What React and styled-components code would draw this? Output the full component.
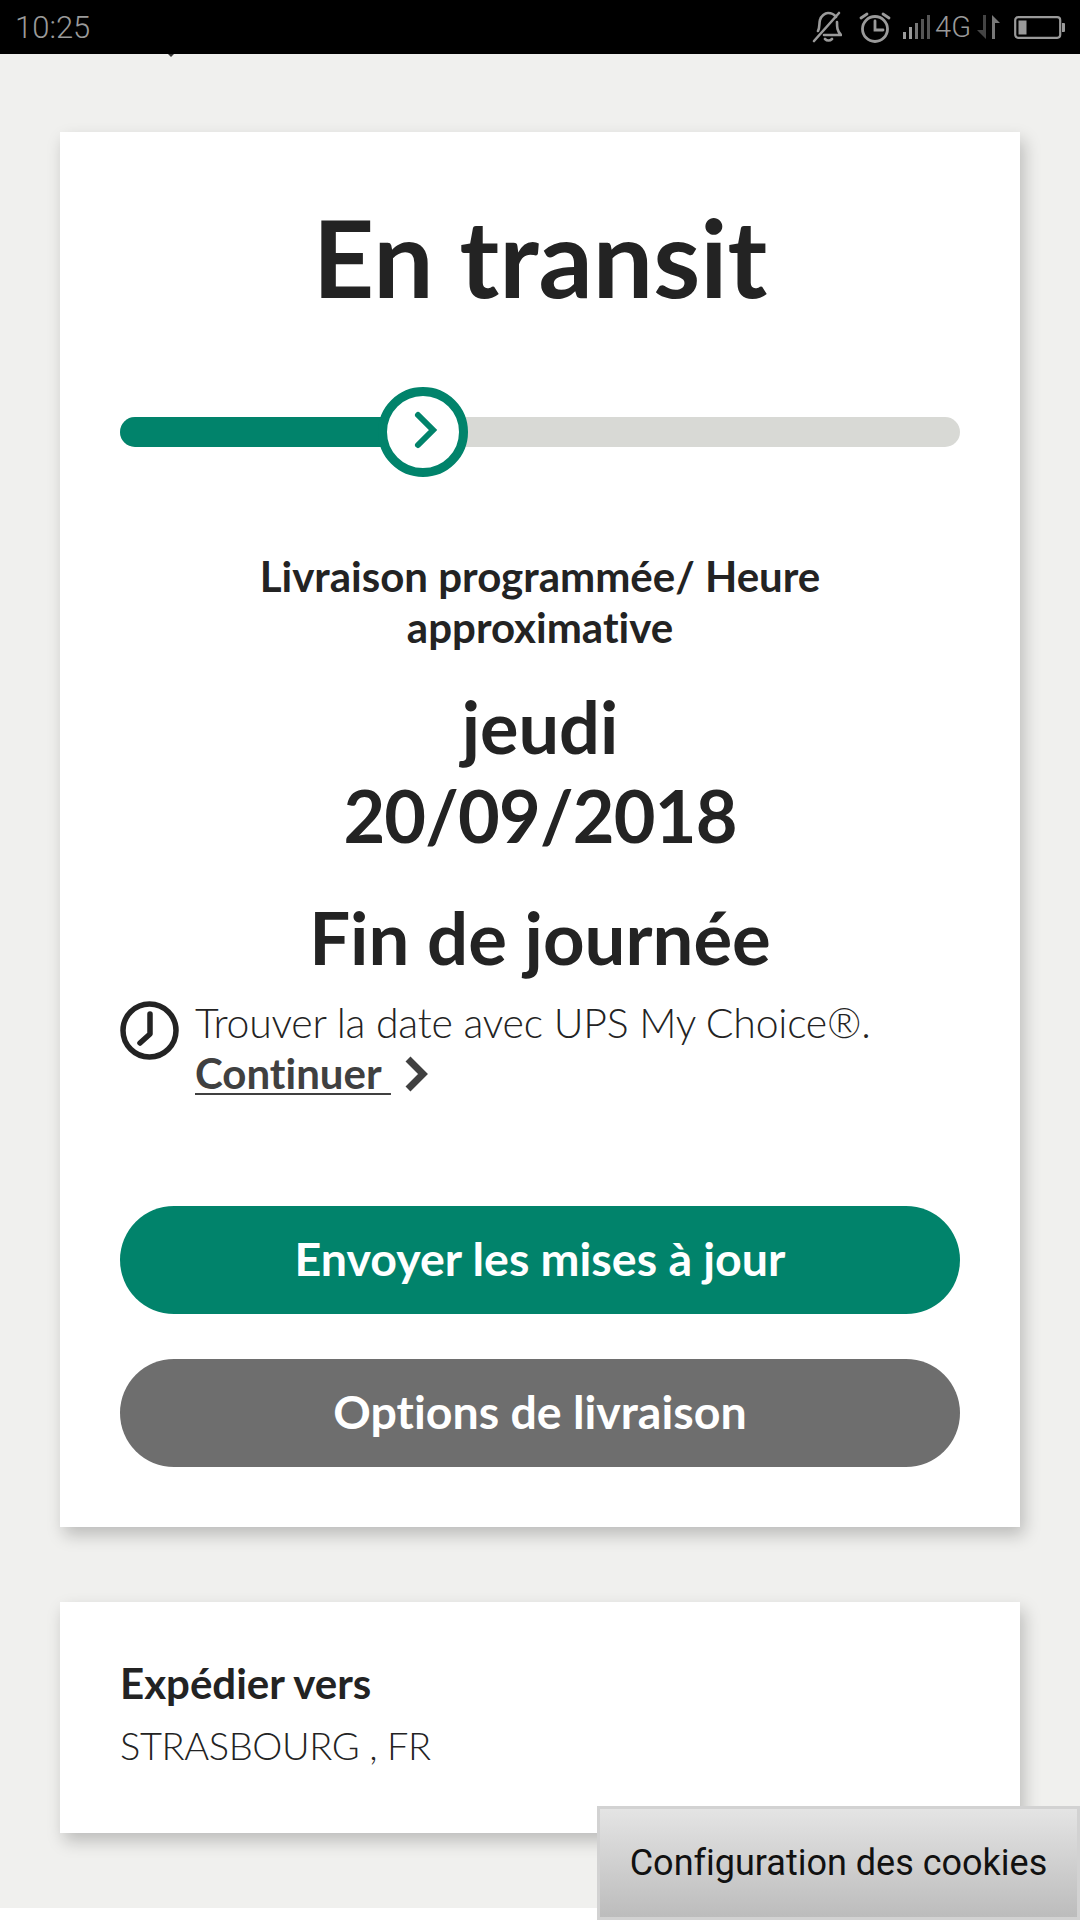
import React from 'react';
import styled, { createGlobalStyle } from 'styled-components';

const Global = createGlobalStyle`
  html, body { margin: 0; padding: 0; background: #f0f0ee; }
  body { font-family: Lato, "Open Sans", sans-serif; color: #232323; font-variant-ligatures: none; }
  * { box-sizing: border-box; }
`;
const Page = styled.div`
  position: relative; width: 1080px; height: 1920px; overflow: hidden; background: #f0f0ee;
  display: flex; flex-direction: column;
`;
const StatusBar = styled.div`
  height: 54px; flex: none; background: #000; display: flex; align-items: center; justify-content: space-between;
  padding: 0 15px 0 15px; color: #9a9a9a;
`;
const Time = styled.span`
  font-family: Roboto, sans-serif; font-size: 31px; font-weight: 300;
`;
const StatusIcons = styled.div`display: flex; align-items: center;`;
const NetLabel = styled.span`font-family: Roboto, sans-serif; font-size: 29px; font-weight: 300; margin: 0 5px 0 5px;`;
const Caret = styled.div`
  position: absolute; left: 168px; top: 54px; width: 0; height: 0;
  border-left: 3px solid transparent; border-right: 3px solid transparent; border-top: 3px solid #333;
`;
const Main = styled.div`
  flex: 1; display: flex; flex-direction: column; gap: 75px; padding: 78px 60px 0;
`;
const Card = styled.section`
  background: #fff; width: 960px; box-shadow: 4px 8px 16px rgba(0,0,0,.22);
`;
const StatusCard = styled(Card)`height: 1395px; padding: 73px 60px 0; display: flex; flex-direction: column;`;
const Title = styled.h1`
  margin: 0; font-size: 107px; line-height: 104px; font-weight: 700; text-align: center;
`;
const Progress = styled.div`
  position: relative; height: 30px; margin-top: 108px; border-radius: 15px; background: #d8d9d5;
`;
const ProgressFill = styled.div`
  height: 100%; border-radius: 15px 0 0 15px; background: #01836b;
`;
const Knob = styled.div`
  position: absolute; left: 258px; top: -30px; width: 90px; height: 90px; border-radius: 50%;
  background: #fff; border: 9px solid #01836b; display: flex; align-items: center; justify-content: center;
`;
const Label = styled.div`
  margin-top: 104px; font-size: 42px; line-height: 51px; font-weight: 700; text-align: center;
`;
const DateText = styled.div`
  margin-top: 29px; font-size: 72px; line-height: 89px; font-weight: 700; text-align: center;
`;
const DateLine = styled.span`letter-spacing: -.8px;`;
const Slot = styled.div`
  margin-top: 33px; font-size: 72.5px; line-height: 88px; font-weight: 700; text-align: center;
`;
const Hint = styled.div`display: flex; gap: 16px; margin-top: 16px;`;
const HintIcon = styled.svg`flex: none; width: 59px; height: 59px; margin-top: 4px;`;
const HintText = styled.div`font-size: 41px; line-height: 51px; font-weight: 300; letter-spacing: -.25px;`;
const LinkRow = styled.div`display: flex; align-items: center; gap: 13px;`;
const Link = styled.a`font-size: 42px; font-weight: 700; letter-spacing: 0; color: #404040; text-decoration: underline; text-underline-offset: 4px; text-decoration-thickness: 2px; white-space: pre;`;
const Buttons = styled.div`display: flex; flex-direction: column; gap: 45px; margin-top: 107px;`;
const Button = styled.div`
  height: 108px; padding-bottom: 4px; border-radius: 54px; display: flex; align-items: center; justify-content: center;
  color: #fff; font-size: 46.5px; font-weight: 700; background: ${p => p.$bg};
`;
const ShipCard = styled(Card)`height: 231px; padding: 56px 60px 0;`;
const ShipLabel = styled.div`font-size: 42px; line-height: 50px; font-weight: 700;`;
const ShipValue = styled.div`font-size: 38px; line-height: 50px; font-weight: 300; letter-spacing: -.4px; margin-top: 12px;`;
const FootStrip = styled.div`position: absolute; left: 0; right: 0; bottom: 0; height: 12px; background: #fff;`;
const Cookie = styled.div`
  position: absolute; right: 0; bottom: 0; width: 483px; height: 114px;
  border: 3px solid #d2d2d2;
  background: linear-gradient(#e4e4e4, #bcbcbc);
  font-family: Roboto, sans-serif; font-size: 36px; color: #111;
  display: flex; align-items: center; justify-content: center;
`;

const Bell = () => (
  <svg width="30" height="32" viewBox="0 0 30 32" fill="none" stroke="#9a9a9a" strokeWidth="2.6" strokeLinecap="round" strokeLinejoin="round">
    <path d="M6 20c2-4 1-8 2-11 1-4 5-7 8-7 3 0 6 1 8 4M25 11c0 5 0 9 4 13H12M13 28c2 2 5 2 7 0" />
    <path d="M2 30 27 2" />
  </svg>
);
const Alarm = () => (
  <svg width="32" height="31" viewBox="0 0 32 31" fill="none" stroke="#9a9a9a" strokeWidth="2.8" strokeLinecap="round" style={{ marginLeft: 17 }}>
    <circle cx="16" cy="17" r="12.5" />
    <path d="M16 9v9h8M2 6l6-4M30 6l-6-4" />
  </svg>
);
const Signal = () => (
  <svg width="27" height="24" viewBox="0 0 27 24" fill="#9a9a9a" style={{ marginLeft: 12 }}>
    <rect x="0" y="17" width="3" height="7" />
    <rect x="6" y="12" width="3" height="12" />
    <rect x="12" y="8" width="3" height="16" fill="#777" />
    <rect x="18" y="4" width="3" height="20" fill="#555" />
    <rect x="24" y="0" width="3" height="24" fill="#555" />
  </svg>
);
const Arrows = () => (
  <svg width="26" height="24" viewBox="0 0 26 24">
    <path d="M7 0h3v24L1 15h6z" fill="#444" />
    <path d="M16 24V0l8 8h-5v16z" fill="#777" />
  </svg>
);
const Battery = () => (
  <svg width="51" height="23" viewBox="0 0 51 23" fill="none" style={{ marginLeft: 12 }}>
    <rect x="1.2" y="1.2" width="45" height="20.6" rx="3" stroke="#9a9a9a" strokeWidth="2.2" />
    <rect x="4.5" y="4.5" width="8" height="14" fill="#9a9a9a" />
    <path d="M48 7h2a1 1 0 0 1 1 1v7a1 1 0 0 1-1 1h-2z" fill="#9a9a9a" />
  </svg>
);

export default function App() {
  return (
    <Page>
      <Global />
      <StatusBar>
        <Time>10:25</Time>
        <StatusIcons>
          <Bell /><Alarm /><Signal /><NetLabel>4G</NetLabel><Arrows /><Battery />
        </StatusIcons>
      </StatusBar>
      <Caret />
      <Main>
        <StatusCard>
          <Title>En transit</Title>
          <Progress>
            <ProgressFill style={{ width: '40%' }} />
            <Knob>
              <svg width="30" height="40" viewBox="0 0 30 40" fill="none" stroke="#01836b" strokeWidth="6" strokeLinecap="round" strokeLinejoin="miter" style={{ marginLeft: 6, marginTop: -4 }}>
                <path d="M7 5l15 15L7 35" />
              </svg>
            </Knob>
          </Progress>
          <Label>Livraison programmée/ Heure<br />approximative</Label>
          <DateText>jeudi<br /><DateLine>20/09/2018</DateLine></DateText>
          <Slot>Fin de journée</Slot>
          <Hint>
            <HintIcon viewBox="0 0 59 59" fill="none" stroke="#232323" strokeWidth="5.5" strokeLinecap="round" strokeLinejoin="round">
              <circle cx="29.5" cy="29.5" r="26.5" />
              <path d="M30 13v20l-10 9" />
            </HintIcon>
            <HintText>
              Trouver la date avec UPS My Choice®.
              <LinkRow>
                <Link>Continuer </Link>
                <svg width="24" height="36" viewBox="0 0 24 36" fill="none" stroke="#404040" strokeWidth="7">
                  <path d="M4 3l15 15L4 33" />
                </svg>
              </LinkRow>
            </HintText>
          </Hint>
          <Buttons>
            <Button $bg="#01836b">Envoyer les mises à jour</Button>
            <Button $bg="#6e6e6e">Options de livraison</Button>
          </Buttons>
        </StatusCard>
        <ShipCard>
          <ShipLabel>Expédier vers</ShipLabel>
          <ShipValue>STRASBOURG , FR</ShipValue>
        </ShipCard>
      </Main>
      <FootStrip />
      <Cookie>Configuration des cookies</Cookie>
    </Page>
  );
}
